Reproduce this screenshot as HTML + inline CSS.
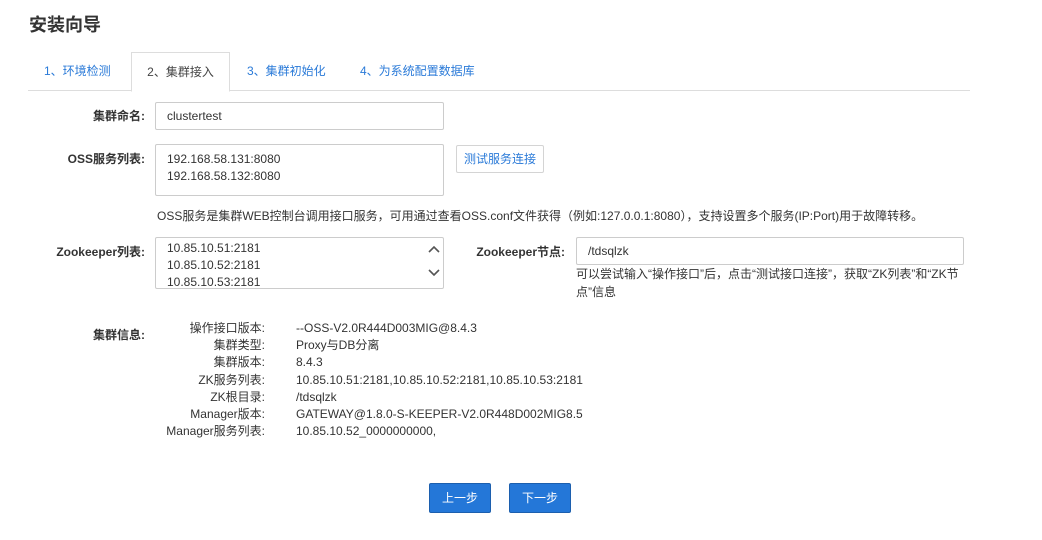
<!DOCTYPE html>
<html><head><meta charset="utf-8"><style>
body{margin:0;width:1042px;height:540px;background:#fff;font-family:"Liberation Sans","Noto Sans CJK SC",sans-serif;font-size:12px;color:#333;position:relative;overflow:hidden}
.a{position:absolute;white-space:nowrap;line-height:17px}
.title{left:29px;top:13px;font-size:18px;font-weight:bold;color:#333;line-height:24px}
.line{left:28px;top:90px;width:942px;height:1px;background:#ddd}
.tab{top:52px;height:38px;line-height:38px;color:#2a7ad8;font-size:12px}
.act{left:131px;width:97px;border:1px solid #ddd;border-bottom:1px solid #fff;background:#fff;color:#444;text-align:center;height:38px;line-height:38px}
.lbl{font-weight:bold;color:#333;text-align:right}
.box{border:1px solid #ccc;border-radius:2px;background:#fff;box-sizing:border-box}
.btn{background:#2477d8;border:1px solid #1c5fae;border-radius:2px;color:#fff;text-align:center;line-height:28px;width:62px;height:30px;box-sizing:border-box}
.k{width:120px;left:145px;text-align:right}
.v{left:296px}
</style></head><body>
<div class="a title">安装向导</div>
<div class="a line"></div>
<div class="a tab" style="left:44px">1、环境检测</div>
<div class="a tab act">2、集群接入</div>
<div class="a tab" style="left:247px">3、集群初始化</div>
<div class="a tab" style="left:360px">4、为系统配置数据库</div>

<div class="a lbl" style="left:40px;width:105px;top:108px">集群命名:</div>
<div class="a box" style="left:155px;top:102px;width:289px;height:28px;padding:5px 11px">clustertest</div>

<div class="a lbl" style="left:40px;width:105px;top:151px">OSS服务列表:</div>
<div class="a box" style="left:155px;top:144px;width:289px;height:52px;padding:6px 11px;line-height:17px">192.168.58.131:8080<br>192.168.58.132:8080</div>
<div class="a box" style="left:456px;top:145px;width:88px;height:28px;line-height:26px;text-align:center;color:#2a7ad8;border-color:#d4d4d4">测试服务连接</div>
<div class="a" style="left:157px;top:208px">OSS服务是集群WEB控制台调用接口服务，可用通过查看OSS.conf文件获得（例如:127.0.0.1:8080），支持设置多个服务(IP:Port)用于故障转移。</div>

<div class="a lbl" style="left:20px;width:125px;top:244px">Zookeeper列表:</div>
<div class="a box" style="left:155px;top:237px;width:289px;height:52px;padding:2px 11px;line-height:17px;overflow:hidden">10.85.10.51:2181<br>10.85.10.52:2181<br>10.85.10.53:2181</div>
<svg class="a" style="left:428px;top:244px" width="12" height="38"><path d="M1 8 L6 3 L11 8" stroke="#555" stroke-width="1.6" fill="none"/><path d="M1 26 L6 31 L11 26" stroke="#555" stroke-width="1.6" fill="none"/></svg>

<div class="a lbl" style="left:440px;width:125px;top:244px">Zookeeper节点:</div>
<div class="a box" style="left:576px;top:237px;width:388px;height:28px;padding:5px 11px">/tdsqlzk</div>
<div class="a" style="left:576px;top:265px;line-height:18px;white-space:normal;width:392px">可以尝试输入“操作接口”后，点击“测试接口连接”，获取“ZK列表”和“ZK节点”信息</div>

<div class="a lbl" style="left:40px;width:105px;top:327px">集群信息:</div>
<div class="a k" style="top:320px">操作接口版本:</div><div class="a v" style="top:320px">--OSS-V2.0R444D003MIG@8.4.3</div>
<div class="a k" style="top:337px">集群类型:</div><div class="a v" style="top:337px">Proxy与DB分离</div>
<div class="a k" style="top:354px">集群版本:</div><div class="a v" style="top:354px">8.4.3</div>
<div class="a k" style="top:372px">ZK服务列表:</div><div class="a v" style="top:372px">10.85.10.51:2181,10.85.10.52:2181,10.85.10.53:2181</div>
<div class="a k" style="top:389px">ZK根目录:</div><div class="a v" style="top:389px">/tdsqlzk</div>
<div class="a k" style="top:406px">Manager版本:</div><div class="a v" style="top:406px">GATEWAY@1.8.0-S-KEEPER-V2.0R448D002MIG8.5</div>
<div class="a k" style="top:423px">Manager服务列表:</div><div class="a v" style="top:423px">10.85.10.52_0000000000,</div>

<div class="a btn" style="left:429px;top:483px;line-height:28px">上一步</div>
<div class="a btn" style="left:509px;top:483px;line-height:28px">下一步</div>
</body></html>
